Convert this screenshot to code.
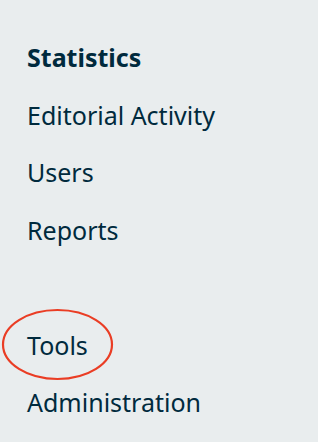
const ITEMS = [
  { label: 'Editorial Activity' },
  { label: 'Users' },
  { label: 'Reports' },
] as const;

export default function App() {
  return (
    <div className="w-[318px] h-[442px] bg-[#e9edee] text-[#002a3d] font-['Noto_Sans',sans-serif] text-[25px] leading-[57.5px] pl-[27px] pt-[29px]">
      <div className="font-bold">Statistics</div>
      {ITEMS.map((item) => (
        <div key={item.label}>{item.label}</div>
      ))}
      <div className="mt-[57.5px] relative">
        Tools
        <svg
          className="absolute left-[-26px] top-[-9px]"
          width="114"
          height="73"
          viewBox="0 0 114 73"
          fill="none"
        >
          <ellipse cx="56.5" cy="36.5" rx="54.5" ry="34.5" stroke="#ea3d24" strokeWidth="2.2" />
        </svg>
      </div>
      <div>Administration</div>
    </div>
  );
}
